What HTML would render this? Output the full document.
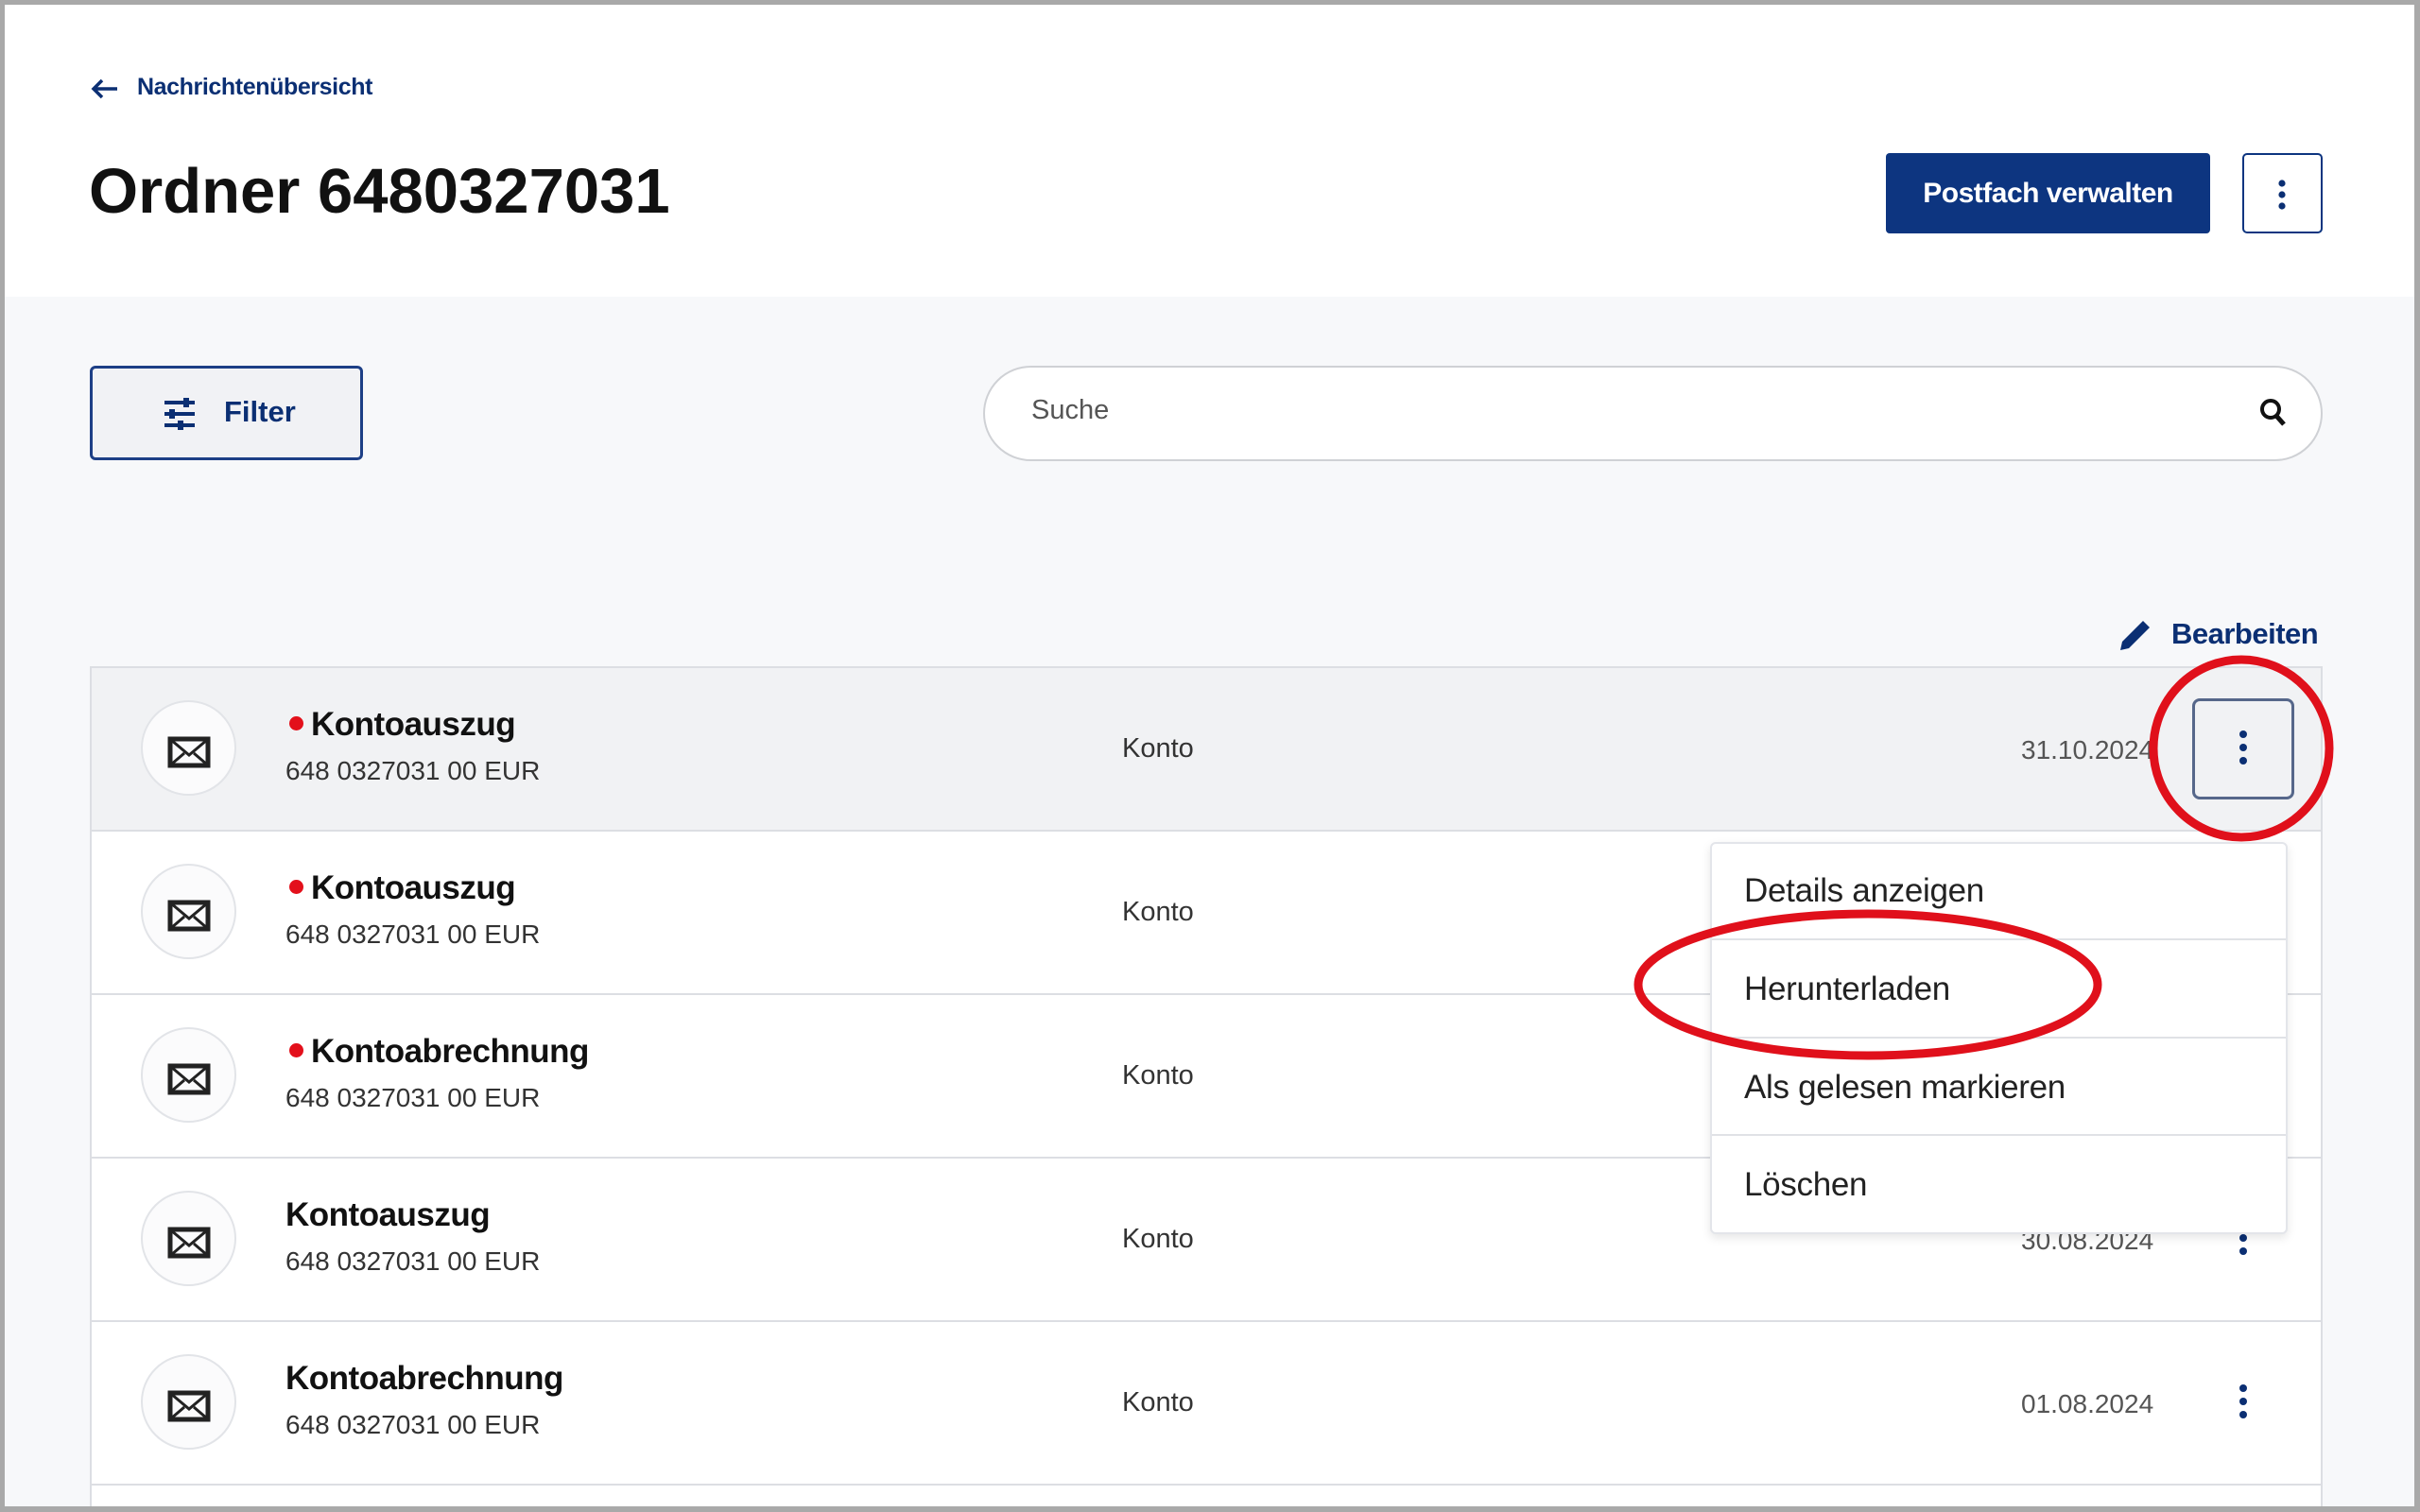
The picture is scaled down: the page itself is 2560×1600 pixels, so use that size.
<!DOCTYPE html>
<html style="width:2560px;height:1600px;overflow:hidden"><head><meta charset="utf-8"><style>
*{margin:0;padding:0;box-sizing:border-box}
body{width:2560px;height:1600px;overflow:hidden;background:#fff;font-family:"Liberation Sans",sans-serif;position:relative}
.a{position:absolute}
.frame{left:0;top:0;width:2560px;height:1600px;border:5px solid #a9a9a9;border-right-width:6px;border-bottom-width:6px;z-index:50;pointer-events:none}
.gray{left:0;top:314px;width:2560px;height:1286px;background:#f7f8fa}
.navy{color:#0b2f73}
.row{left:95px;width:2362px;height:173px;border:2px solid #dcdee3;border-bottom:none;background:#fff}
.row.sel{background:#f1f2f4}
.circ{left:52px;top:34px;width:101px;height:101px;border-radius:50%;border:2px solid #e2e4e8;background:#fbfbfc}
.t{left:233px;top:40px;font-size:35px;font-weight:bold;color:#111;letter-spacing:-.5px;white-space:nowrap}
.dot{display:inline-block;width:15px;height:15px;border-radius:50%;background:#e3101b;margin-right:8px;vertical-align:5px;margin-left:-24px}
.s{left:205px;top:93px;font-size:28px;color:#333;white-space:nowrap}
.k{left:1090px;top:69px;font-size:29px;color:#333}
.d{left:2041px;top:71px;font-size:28px;color:#555}
.menu{left:1809px;top:891px;width:611px;height:415px;background:#fff;border:2px solid #e3e5ea;border-radius:6px;box-shadow:0 4px 10px rgba(0,0,0,.1);z-index:10}
.mi{position:absolute;left:34px;font-size:35px;color:#222;letter-spacing:-.3px}
.sep{position:absolute;left:0;width:100%;height:2px;background:#e0e2e6}
</style></head><body>
<div class="a gray"></div>
<svg class="a" style="left:96px;top:83px" width="30" height="22" viewBox="0 0 30 22"><path d="M28 11H4M12 2 3 11l9 9" stroke="#0b2f73" stroke-width="3.5" fill="none"/></svg>
<div class="a navy" style="left:145px;top:78px;font-size:25px;font-weight:bold;letter-spacing:-.4px">Nachrichtenübersicht</div>
<div class="a" style="left:94px;top:164px;font-size:67px;font-weight:bold;color:#111">Ordner 6480327031</div>
<div class="a" style="left:1995px;top:162px;width:343px;height:85px;background:#0d3580;border-radius:4px;color:#fff;font-size:30px;font-weight:bold;text-align:center;line-height:85px;letter-spacing:-.5px">Postfach verwalten</div>
<div class="a" style="left:2372px;top:162px;width:85px;height:85px;border:2px solid #0d3580;border-radius:5px;background:#fff"></div>
<svg class="a" style="left:2404px;top:189px" width="20" height="34"><circle cx="10" cy="5" r="3.6" fill="#0b2f73"/><circle cx="10" cy="17" r="3.6" fill="#0b2f73"/><circle cx="10" cy="29" r="3.6" fill="#0b2f73"/></svg>
<div class="a" style="left:95px;top:387px;width:289px;height:100px;border:3px solid #1d3f86;border-radius:6px;background:#f1f2f5"></div>
<svg class="a" style="left:172px;top:419px" width="36" height="38" viewBox="0 0 36 38"><g stroke="#0b2f73" stroke-width="4" fill="none"><path d="M2 7h32M2 19h32M2 31h32"/></g><g fill="#0b2f73"><rect x="22" y="2" width="6" height="10"/><rect x="7" y="14" width="6" height="10"/><rect x="16" y="26" width="6" height="10"/></g></svg>
<div class="a navy" style="left:237px;top:418px;font-size:31px;font-weight:bold">Filter</div>
<div class="a" style="left:1040px;top:387px;width:1417px;height:101px;border:2px solid #cfd1d5;border-radius:51px;background:#fff"></div>
<div class="a" style="left:1091px;top:418px;font-size:29px;color:#555">Suche</div>
<svg class="a" style="left:2390px;top:420px" width="30" height="34" viewBox="0 0 30 34"><circle cx="12" cy="13" r="9" stroke="#111" stroke-width="4" fill="none"/><path d="M18 20l8 9" stroke="#111" stroke-width="5"/></svg>
<svg class="a" style="left:2238px;top:652px" width="40" height="40" viewBox="0 0 40 40"><path d="M5 36l2-9L29 5l7 7-22 22z" fill="#0b2f73"/></svg>
<div class="a navy" style="left:2297px;top:653px;font-size:31px;font-weight:bold;letter-spacing:-.5px">Bearbeiten</div>

<div class="a row sel" style="top:705px">
 <div class="a circ"></div><svg class="a" style="left:80px;top:72px" width="46" height="34" viewBox="0 0 46 34"><rect x="3" y="3" width="40" height="28" fill="none" stroke="#222" stroke-width="5"/><path d="M4 4l19 16L42 4M4 30l14-12M42 30L28 18" fill="none" stroke="#222" stroke-width="3"/></svg>
 <div class="a t"><span class="dot"></span>Kontoauszug</div><div class="a s">648 0327031 00 EUR</div>
 <div class="a k">Konto</div><div class="a d">31.10.2024</div>
 <div class="a" style="left:2222px;top:32px;width:108px;height:107px;border:3px solid #56678a;border-radius:8px;background:#f1f2f4"></div>
 <svg class="a" style="left:2266px;top:64px" width="20" height="44"><circle cx="10" cy="6" r="4" fill="#0b2f73"/><circle cx="10" cy="20" r="4" fill="#0b2f73"/><circle cx="10" cy="34" r="4" fill="#0b2f73"/></svg>
</div>
<div class="a row" style="top:878px">
 <div class="a circ"></div><svg class="a" style="left:80px;top:72px" width="46" height="34" viewBox="0 0 46 34"><rect x="3" y="3" width="40" height="28" fill="none" stroke="#222" stroke-width="5"/><path d="M4 4l19 16L42 4M4 30l14-12M42 30L28 18" fill="none" stroke="#222" stroke-width="3"/></svg>
 <div class="a t"><span class="dot"></span>Kontoauszug</div><div class="a s">648 0327031 00 EUR</div><div class="a k">Konto</div>
</div>
<div class="a row" style="top:1051px">
 <div class="a circ"></div><svg class="a" style="left:80px;top:72px" width="46" height="34" viewBox="0 0 46 34"><rect x="3" y="3" width="40" height="28" fill="none" stroke="#222" stroke-width="5"/><path d="M4 4l19 16L42 4M4 30l14-12M42 30L28 18" fill="none" stroke="#222" stroke-width="3"/></svg>
 <div class="a t"><span class="dot"></span>Kontoabrechnung</div><div class="a s">648 0327031 00 EUR</div><div class="a k">Konto</div>
</div>
<div class="a row" style="top:1224px">
 <div class="a circ"></div><svg class="a" style="left:80px;top:72px" width="46" height="34" viewBox="0 0 46 34"><rect x="3" y="3" width="40" height="28" fill="none" stroke="#222" stroke-width="5"/><path d="M4 4l19 16L42 4M4 30l14-12M42 30L28 18" fill="none" stroke="#222" stroke-width="3"/></svg>
 <div class="a t" style="left:205px">Kontoauszug</div><div class="a s">648 0327031 00 EUR</div><div class="a k">Konto</div><div class="a d">30.08.2024</div>
 <svg class="a" style="left:2266px;top:64px" width="20" height="44"><circle cx="10" cy="6" r="4" fill="#0b2f73"/><circle cx="10" cy="20" r="4" fill="#0b2f73"/><circle cx="10" cy="34" r="4" fill="#0b2f73"/></svg>
</div>
<div class="a row" style="top:1397px">
 <div class="a circ"></div><svg class="a" style="left:80px;top:72px" width="46" height="34" viewBox="0 0 46 34"><rect x="3" y="3" width="40" height="28" fill="none" stroke="#222" stroke-width="5"/><path d="M4 4l19 16L42 4M4 30l14-12M42 30L28 18" fill="none" stroke="#222" stroke-width="3"/></svg>
 <div class="a t" style="left:205px">Kontoabrechnung</div><div class="a s">648 0327031 00 EUR</div><div class="a k">Konto</div><div class="a d">01.08.2024</div>
 <svg class="a" style="left:2266px;top:64px" width="20" height="44"><circle cx="10" cy="6" r="4" fill="#0b2f73"/><circle cx="10" cy="20" r="4" fill="#0b2f73"/><circle cx="10" cy="34" r="4" fill="#0b2f73"/></svg>
</div>
<div class="a row" style="top:1570px;height:30px"></div>

<div class="a menu">
 <div class="mi" style="top:30px">Details anzeigen</div>
 <div class="sep" style="top:100px"></div>
 <div class="mi" style="top:134px">Herunterladen</div>
 <div class="sep" style="top:204px"></div>
 <div class="mi" style="top:238px">Als gelesen markieren</div>
 <div class="sep" style="top:307px"></div>
 <div class="mi" style="top:341px">Löschen</div>
</div>

<svg class="a" style="left:0;top:0;z-index:20" width="2560" height="1600">
 <ellipse cx="2371" cy="792" rx="93" ry="94" fill="none" stroke="#e0101b" stroke-width="9"/>
 <ellipse cx="1976" cy="1042" rx="243" ry="75" fill="none" stroke="#e0101b" stroke-width="9"/>
</svg>
<div class="a frame"></div>
</body></html>
